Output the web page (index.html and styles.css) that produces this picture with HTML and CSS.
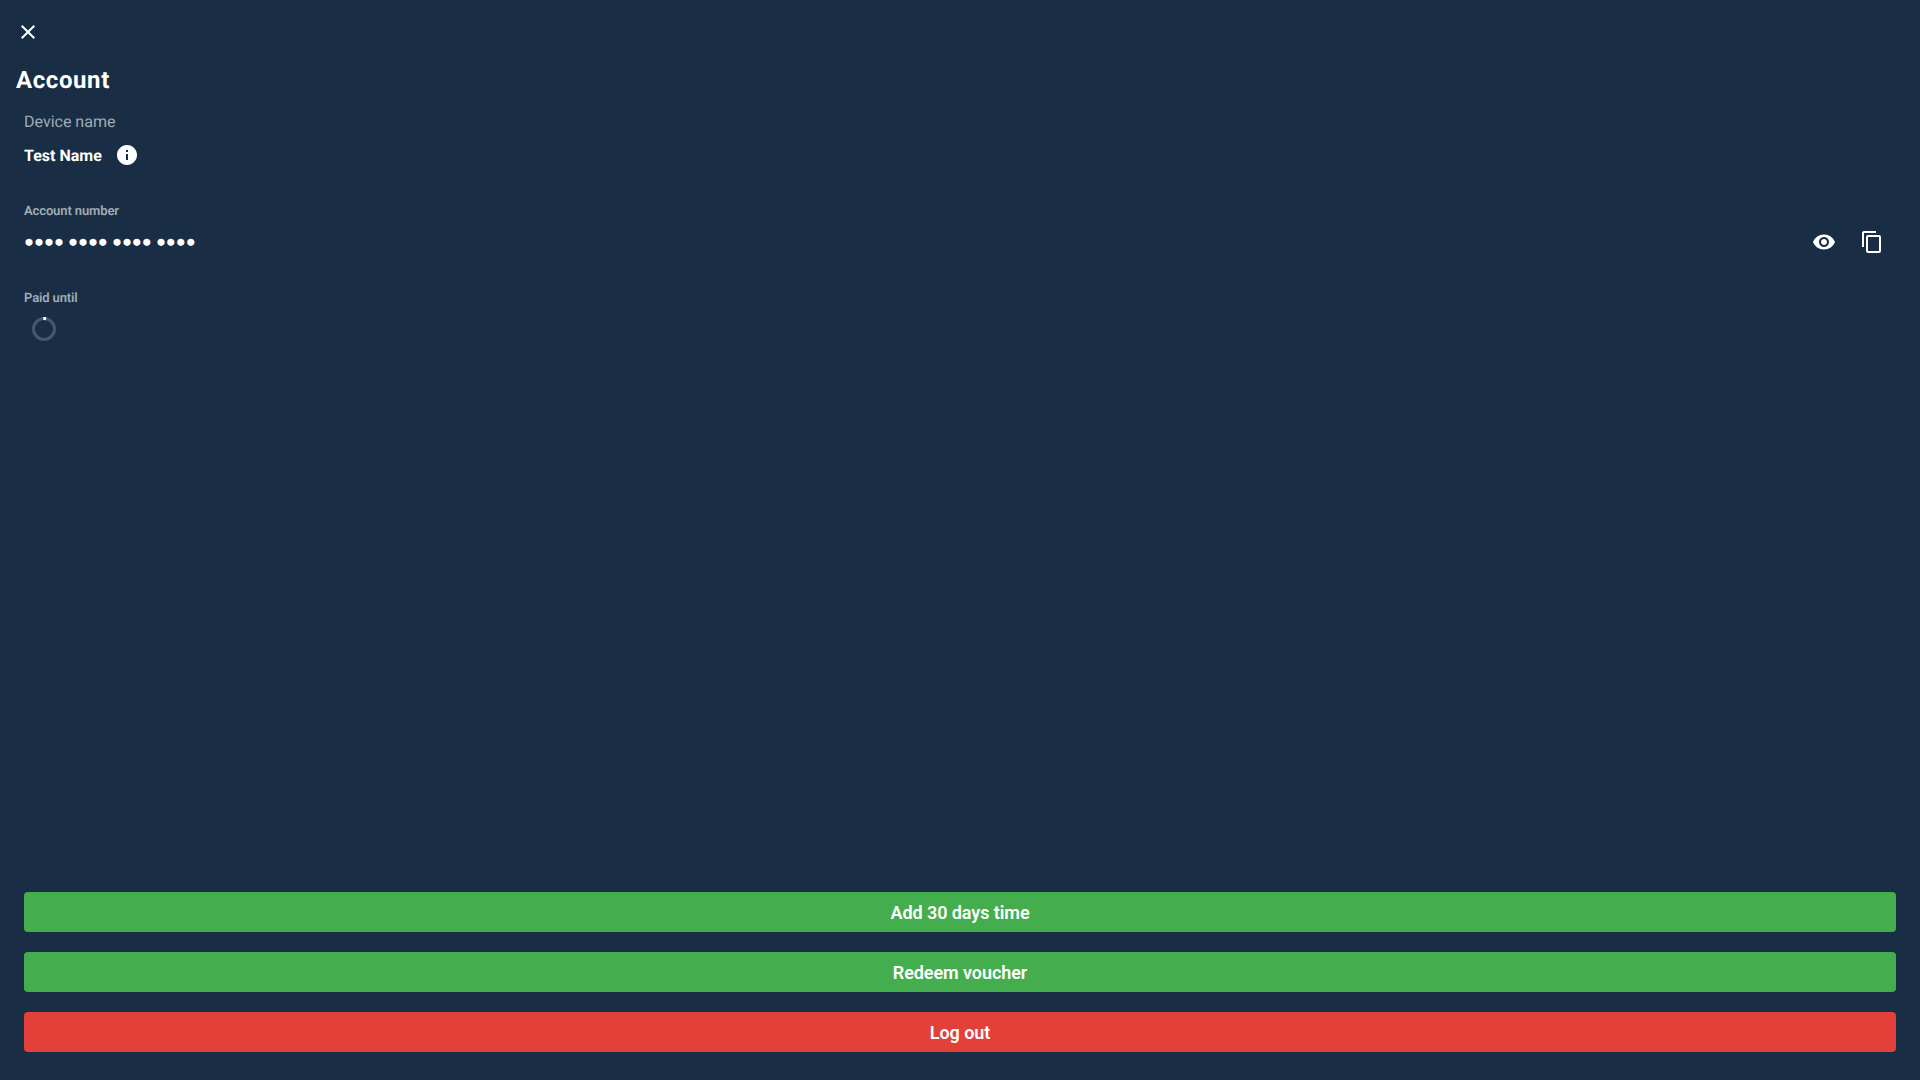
FILE: index.html
```html
<!DOCTYPE html>
<html lang="en">
<head>
<meta charset="utf-8">
<title>Account</title>
<link rel="stylesheet" href="styles.css">
</head>
<body>
<div class="screen">
  <header class="topbar">
    <svg class="icon" viewBox="0 0 24 24"><path d="M19 6.41 17.59 5 12 10.59 6.41 5 5 6.41 10.59 12 5 17.59 6.41 19 12 13.41 17.59 19 19 17.59 13.41 12z"/></svg>
  </header>
  <h1 class="title">Account</h1>
  <main class="content">
    <section class="device">
      <div class="device-label">Device name</div>
      <div class="device-row">
        <span class="device-name">Test Name</span>
        <svg class="icon" viewBox="0 0 24 24"><path d="M12 2C6.48 2 2 6.48 2 12s4.480 10 10 10 10-4.480 10-10S17.520 2 12 2zm1 15h-2v-6h2v6zm0-8h-2V7h2v2z"/></svg>
      </div>
    </section>
    <section class="number">
      <div class="label">Account number</div>
      <div class="number-row">
        <span class="dots">●●●● ●●●● ●●●● ●●●●</span>
        <div class="actions">
          <svg class="icon" viewBox="0 0 24 24"><path d="M12 4.500C7 4.500 2.730 7.610 1 12c1.730 4.390 6 7.500 11 7.500s9.270-3.110 11-7.500c-1.730-4.390-6-7.500-11-7.500zM12 17c-2.760 0-5-2.240-5-5s2.240-5 5-5 5 2.240 5 5-2.240 5-5 5zm0-8c-1.660 0-3 1.340-3 3s1.340 3 3 3 3-1.340 3-3-1.340-3-3-3z"/></svg>
          <svg class="icon" viewBox="0 0 24 24"><path d="M16 1H4c-1.100 0-2 .9-2 2v14h2V3h12V1zm3 4H8c-1.100 0-2 .9-2 2v14c0 1.100.9 2 2 2h11c1.100 0 2-.9 2-2V7c0-1.100-.9-2-2-2zm0 16H8V7h11v14z"/></svg>
        </div>
      </div>
    </section>
    <section class="paid">
      <div class="label">Paid until</div>
      <svg class="spinner" viewBox="0 0 24 24"><circle class="track" cx="12" cy="12" r="10.500"/><circle class="head" cx="12" cy="12" r="10.500" pathLength="360"/></svg>
    </section>
  </main>
  <footer class="buttons">
    <button class="button">Add 30 days time</button>
    <button class="button">Redeem voucher</button>
    <button class="button danger">Log out</button>
  </footer>
</div>
</body>
</html>
```
FILE: styles.css
```css
* { box-sizing: border-box; }
body { margin: 0; background: #192e45; color: #fff; font-family: Roboto, sans-serif; text-rendering: geometricPrecision; }
.screen { height: 1080px; display: flex; flex-direction: column; }
.topbar { height: 64px; padding: 20px 16px; }
.icon { display: block; width: 24px; height: 24px; fill: #fff; flex: none; }
.title { margin: 0 16px; font-size: 24px; line-height: 32px; font-weight: 700; letter-spacing: 0.6px; }
.content { flex: 1; padding: 16px 24px 0; }
.device-label { font-size: 16px; line-height: 20px; color: rgba(255, 255, 255, 0.6); }
.device-row { display: flex; align-items: center; gap: 13px; height: 46px; }
.device-name { padding-top: 1px; font-size: 16px; font-weight: 700; }
.number { margin-top: 26px; }
.label { font-size: 13px; line-height: 16px; font-weight: 600; letter-spacing: -0.12px; color: rgba(255, 255, 255, 0.6); }
.number-row { display: flex; align-items: center; justify-content: space-between; height: 44px; padding-right: 12px; }
.dots { font-size: 16.5px; font-weight: 700; }
.actions { display: flex; gap: 24px; }
.paid { margin-top: 27px; }
.spinner { display: block; width: 24px; height: 24px; margin: 10px 0 0 8px; fill: none; stroke-width: 3; }
.track { stroke: rgba(255, 255, 255, 0.2); }
.head { stroke: #fff; stroke-dasharray: 16 344; stroke-dashoffset: 94; }
.buttons { display: flex; flex-direction: column; gap: 20px; padding: 0 24px 28px; }
.button { height: 40px; border: 0; border-radius: 4px; background: #44ad4d; color: #fff; font-family: inherit; font-size: 18px; font-weight: 600; letter-spacing: -0.07px; }
.danger { background: #e34039; }
```
